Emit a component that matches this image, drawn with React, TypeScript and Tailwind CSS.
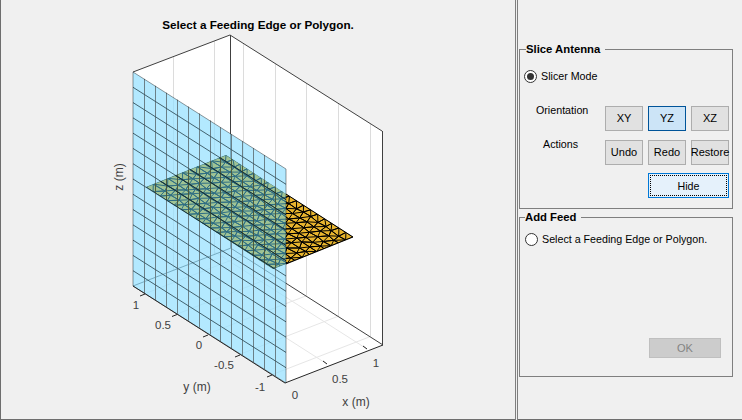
const patch = { left: [146, 187], top: [226, 155], bottom: [273, 269] }

function pt(u: number, v: number) {
  return [
    patch.left[0] + (patch.bottom[0] - patch.left[0]) * u + (patch.top[0] - patch.left[0]) * v,
    patch.left[1] + (patch.bottom[1] - patch.left[1]) * u + (patch.top[1] - patch.left[1]) * v,
  ]
}

// triangular lattice with a small fixed jitter, like a real triangulation
function meshPaths() {
  const nu = 18
  const nv = 11
  const node = (i: number, j: number) => {
    const onEdge = i === 0 || j === 0 || i === nu || j === nv
    const a = Math.sin(i * 12.9 + j * 78.2) * 43758.5
    const b = Math.sin(i * 39.3 + j * 11.1) * 24634.6
    const du = onEdge ? 0 : ((a - Math.floor(a)) - 0.5) * 0.25 + (j % 2) * 0.5
    const dv = onEdge ? 0 : ((b - Math.floor(b)) - 0.5) * 0.25
    const [x, y] = pt((i + du) / nu, (j + dv) / nv)
    return `${x.toFixed(1)} ${y.toFixed(1)}`
  }
  let d = ""
  for (let i = 0; i < nu; i++) {
    for (let j = 0; j < nv; j++) {
      const p00 = node(i, j)
      const p10 = node(i + 1, j)
      const p01 = node(i, j + 1)
      const p11 = node(i + 1, j + 1)
      d += `M${p00}L${p10}L${p11}L${p01}Z`
      d += j % 2 ? `M${p00}L${p11}` : `M${p10}L${p01}`
    }
  }
  return d
}

const meshD = meshPaths()
const plane = { tl: [133, 72], tr: [286, 169], br: [286, 383], bl: [133, 286] }

function PlaneGrid({ dark }: { dark?: boolean }) {
  const idx = Array.from({ length: 13 }, (_, i) => i + 1)
  return (
    <g>
      {idx.map((i) => {
        const x = Math.round(133 + (153 * i) / 14) + 0.5
        const top = 72 + (97 * i) / 14
        return <line key={"v" + i} x1={x} y1={top} x2={x} y2={top + 214} stroke={dark ? "#4d5a3a" : "#6a8088"} />
      })}
      {idx.map((i) => {
        const h = (214 * i) / 14
        return <line key={"h" + i} x1="133" y1={72 + h} x2="286" y2={169 + h} stroke={dark ? "#0f2a30" : "#35525e"} strokeWidth="0.9" />
      })}
    </g>
  )
}

function Chart() {
  const yTicks = [145, 177, 208, 240, 272]
  const frontY = (x: number) => 286 + (x - 133) * 0.638
  const xTicks = [[327, 364], [367, 349]]
  return (
    <svg width="515" height="419" viewBox="0 0 515 419" className="block -ml-[1px]">
      <defs>
        <clipPath id="behind">
          <polygon points="146,187 226,155 286,194 286,264 273,269" />
        </clipPath>
        <clipPath id="outside">
          <polygon points="286,194 353,237 286,264" />
        </clipPath>
      </defs>
      <polygon points="133,72 230,35 382,131 383,345 285,383 133,286" fill="#ffffff" />
      {/* wall grid */}
      {yTicks.map((x) => {
        const wx = x + 98
        return <line key={x} x1={wx + 0.5} y1={35 + (wx - 230) * 0.632} x2={wx + 0.5} y2={248 + (wx - 231) * 0.638} stroke="#dcdcdc" />
      })}
      <line x1="173.500" y1="57" x2="173.500" y2="270" stroke="#dcdcdc" />
      <line x1="214.500" y1="41" x2="214.500" y2="254" stroke="#dcdcdc" />
      {/* floor grid */}
      {yTicks.map((x) => (
        <line key={x} x1={x} y1={frontY(x)} x2={x + 98} y2={frontY(x) - 38} stroke="#e6e6e6" />
      ))}
      {xTicks.map(([x, y]) => (
        <line key={x} x1={x} y1={y} x2={x - 152} y2={y - 97} stroke="#e6e6e6" />
      ))}
      {/* box */}
      <path d="M133 72L230 35L382 131M230.500 35V248L383 345M382.500 131V345M133 286L231 248" fill="none" stroke="#404040" />
      <path d="M285 383L383 345" fill="none" stroke="#262626" />
      {/* gold feed mesh */}
      <polygon points="286,194 353,237 286,264" fill="#e8b52e" />
      <g clipPath="url(#outside)">
        <path d={meshD} fill="none" stroke="#000000" strokeWidth="1" />
      </g>
      <path d="M286 194L353 237L286 264" fill="none" stroke="#000000" />
      {/* slice plane */}
      <polygon
        points={`${plane.tl} ${plane.tr} ${plane.br} ${plane.bl}`}
        fill="#8fdfff"
        fillOpacity="0.68"
      />
      <polygon points="146,187 226,155 286,194 286,264 273,269" fill="#9fc394" />
      <g clipPath="url(#behind)">
        <path d={meshD} fill="none" stroke="#2f6e84" strokeWidth="1" />
      </g>
      {/* plane grid, darker where it crosses the mesh */}
      <PlaneGrid />
      <g clipPath="url(#behind)">
        <PlaneGrid dark />
      </g>
      <polygon
        points={`${plane.tl} ${plane.tr} ${plane.br} ${plane.bl}`}
        fill="none"
        stroke="#000000"
        strokeOpacity="0.4"
      />
      <path d="M133 286L285 383" fill="none" stroke="#262626" />
      {/* ticks */}
      <path d="M145 294l-5 2M177 314.500l-5 2M208 335l-5 2M240 355l-5 2M272 375l-5 2M327 364l-4 -3M367 349l-4 -3" fill="none" stroke="#262626" />
      <g fontFamily="'Liberation Sans', Arial, sans-serif" fontSize="11.500" fill="#404040">
        <text x="136" y="309" textAnchor="middle">1</text>
        <text x="163" y="329" textAnchor="middle">0.5</text>
        <text x="199" y="349" textAnchor="middle">0</text>
        <text x="224" y="369" textAnchor="middle">-0.5</text>
        <text x="260" y="391" textAnchor="middle">-1</text>
        <text x="295" y="399" textAnchor="middle">0</text>
        <text x="340" y="383" textAnchor="middle">0.5</text>
        <text x="376" y="367" textAnchor="middle">1</text>
        <text x="356" y="406" textAnchor="middle" fontSize="12">x (m)</text>
        <text x="197" y="391" textAnchor="middle" fontSize="12">y (m)</text>
        <text x="0" y="0" textAnchor="middle" fontSize="12" transform="translate(123 177) rotate(-90)">z (m)</text>
      </g>
      <text x="258" y="29" textAnchor="middle" fontFamily="'Liberation Sans', Arial, sans-serif" fontSize="11.700" fontWeight="700" fill="#000000">
        Select a Feeding Edge or Polygon.
      </text>
    </svg>
  )
}

function Radio({ checked, label }: { checked?: boolean; label: string }) {
  return (
    <div className="flex items-center gap-[4px]">
      <span className="w-[13px] h-[13px] rounded-full border border-[#333333] bg-white flex items-center justify-center">
        {checked && <span className="w-[7px] h-[7px] rounded-full bg-[#333333]" />}
      </span>
      <span>{label}</span>
    </div>
  )
}

function Btn({ label }: { label: string }) {
  return (
    <button className="w-[38px] h-[25px] bg-[#e1e1e1] border border-[#adadad] text-[11px] whitespace-nowrap flex items-center justify-center">
      {label}
    </button>
  )
}

export default function App() {
  return (
    <div
      className="w-[742px] h-[420px] bg-[#f0f0f0] flex overflow-hidden text-[10.700px] text-black"
      style={{ fontFamily: "'Liberation Sans', Arial, sans-serif" }}
    >
      <div className="w-[515px] h-full border-l border-b border-[#6e6e6e]">
        <Chart />
      </div>
      <div className="w-[3px] h-full border-x border-[#7f7f7f]" />
      <div className="flex-1 h-full border-b border-[#6e6e6e] pl-[1px] pr-[9px] pt-[43px]">
        <fieldset className="h-[166px] border border-[#7f7f7f] pl-[4px] pr-[3px]">
          <legend className="ml-[2px] pr-[5px] font-bold text-[11.300px] leading-[12px]">Slice Antenna</legend>
          <div className="pt-[13px]">
            <Radio checked label="Slicer Mode" />
          </div>
          <div className="mt-[22px] flex justify-end gap-[5px] relative">
            <span className="absolute left-[12px] top-[-4px]">Orientation</span>
            <Btn label="XY" />
            <button className="w-[38px] h-[25px] bg-[#cce4f7] border border-[#005499] text-[11px]">YZ</button>
            <Btn label="XZ" />
          </div>
          <div className="mt-[9px] flex justify-end gap-[5px] relative">
            <span className="absolute left-[19px] top-[-4px]">Actions</span>
            <Btn label="Undo" />
            <Btn label="Redo" />
            <Btn label="Restore" />
          </div>
          <div className="mt-[8px] flex justify-end">
            <button className="w-[81px] h-[25px] bg-[#e5f1fb] border border-[#0078d7] p-[1px]">
              <span className="w-full h-full border border-dotted border-black flex items-center justify-center">Hide</span>
            </button>
          </div>
        </fieldset>
        <fieldset className="mt-[2px] h-[166px] border border-[#7f7f7f] pl-[5px] pr-[11px]">
          <legend className="pr-[5px] font-bold text-[11.300px] leading-[12px]">Add Feed</legend>
          <div className="pt-[8px]">
            <Radio label="Select a Feeding Edge or Polygon." />
          </div>
          <div className="mt-[91px] flex justify-end">
            <button className="w-[72px] h-[20px] bg-[#cccccc] border border-[#bfbfbf] text-[#838383] text-[11px]">OK</button>
          </div>
        </fieldset>
      </div>
    </div>
  )
}
